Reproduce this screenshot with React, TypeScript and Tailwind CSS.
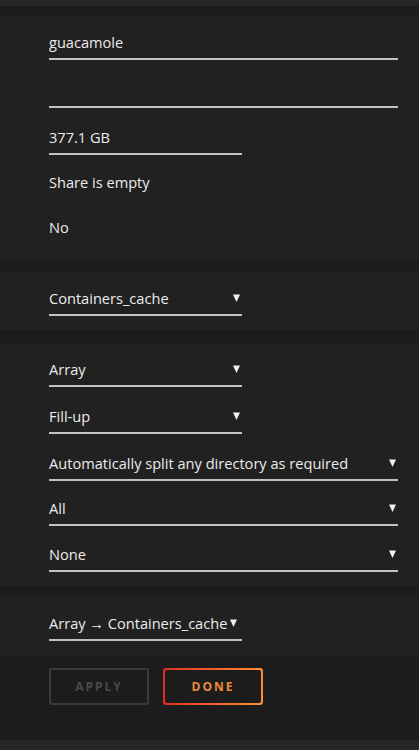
import React from 'react'

const font = { fontFamily: '"Open Sans", "Noto Sans", sans-serif' }

function Arrow() {
  return (
    <svg width="7" height="8" viewBox="0 0 7 8" aria-hidden="true" className="shrink-0">
      <polygon points="0,0.5 7,0.5 3.5,8" fill="#f2f2f2" />
    </svg>
  )
}

function Field({ value, wide = false, select = false, tight = false, className = '' }: {
  value: string
  wide?: boolean
  select?: boolean
  tight?: boolean
  className?: string
}) {
  return (
    <div
      className={`flex items-center ${tight ? 'gap-[3px]' : 'justify-between'} h-[20px] box-content pb-[6px] border-b-2 border-[#c2c2c2] ${wide ? 'w-[349px]' : 'w-[193px]'} ${className}`}
    >
      <span className="text-[14.6px] leading-[20px] text-[#ececec] whitespace-nowrap">{value}</span>
      {select && <span className="pr-[2px]"><Arrow /></span>}
    </div>
  )
}

export default function App() {
  return (
    <div className="w-[419px] h-[750px] bg-[#1c1c1c] overflow-hidden" style={font}>
      <div className="h-[6px] bg-[#262626]" />

      {/* Share settings */}
      <div className="mt-[10px] bg-[#212121] pl-[49px] pt-[16px] h-[244px]">
        <Field value="guacamole" wide />
        <Field value="" wide className="mt-[20px]" />
        <Field value="377.1 GB" className="mt-[19px]" />
        <p className="mt-[17px] text-[14.6px] leading-[20px] text-[#ececec]">Share is empty</p>
        <p className="mt-[25px] text-[14.6px] leading-[20px] text-[#ececec]">No</p>
      </div>

      {/* Pool */}
      <div className="mt-[12px] bg-[#212121] pl-[49px] pt-[16px] h-[58px]">
        <Field value="Containers_cache" select />
      </div>

      {/* Allocation */}
      <div className="mt-[13px] bg-[#212121] pl-[49px] pt-[16px] h-[243px]">
        <Field value="Array" select />
        <Field value="Fill-up" select className="mt-[19px]" />
        <Field value="Automatically split any directory as required" select wide className="mt-[19px]" />
        <Field value="All" select wide className="mt-[17px]" />
        <Field value="None" select wide className="mt-[18px]" />
      </div>

      {/* Mover */}
      <div className="mt-[11px] bg-[#212121] pl-[49px] pt-[16px] h-[60px]">
        <Field
          value="Array → Containers_cache"
          select
          tight
        />
      </div>

      {/* Actions */}
      <div className="h-[83px] pl-[49px] pt-[11px] flex gap-[14px]">
        <button className="w-[100px] h-[37px] rounded-[3px] border-2 border-[#3a3a3a] text-[12px] font-bold tracking-[2px] text-[#4a4a4a]">
          APPLY
        </button>
        <div className="w-[100px] h-[37px] rounded-[3px] p-[2px] bg-gradient-to-r from-[#e22828] to-[#ff8c2f]">
          <button className="w-full h-full rounded-[2px] bg-[#1c1c1c] text-[12px] font-bold tracking-[2px] text-[#ee8a3c]">
            DONE
          </button>
        </div>
      </div>

      <div className="h-[10px] bg-[#262626]" />
    </div>
  )
}
